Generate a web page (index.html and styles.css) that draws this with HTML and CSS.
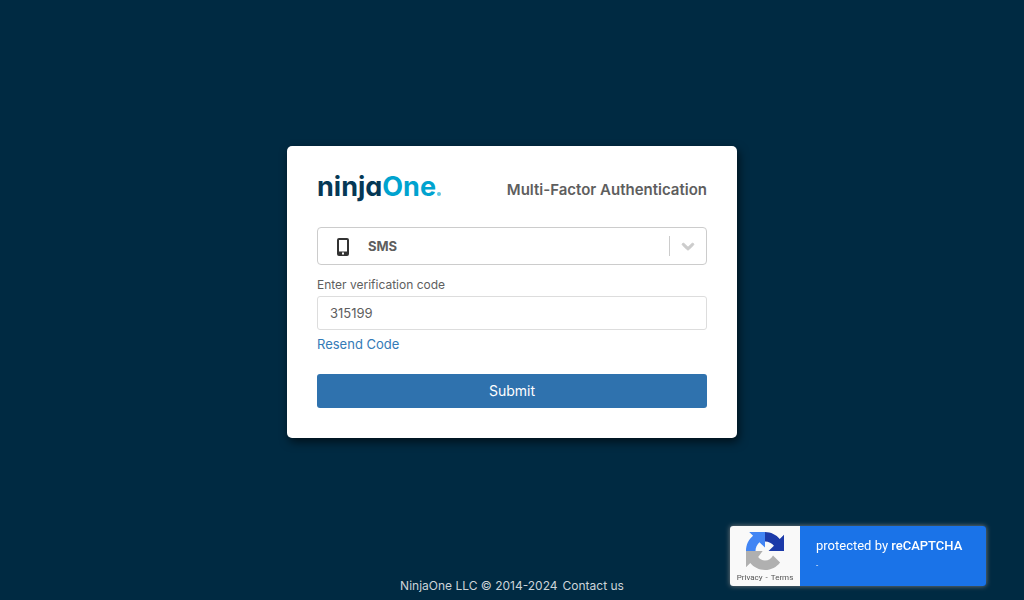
FILE: index.html
```html
<!DOCTYPE html>
<html lang="en">
<head>
<meta charset="utf-8">
<meta name="viewport" content="width=device-width, initial-scale=1">
<title>NinjaOne - Multi-Factor Authentication</title>
<link rel="stylesheet" href="styles.css">
</head>
<body class="page">
<main class="main">
  <form class="card">
    <header class="card-header">
      <div class="logo"><span class="logo-ninja">ninja</span><span class="logo-one">One</span><span class="logo-dot"></span></div>
      <h1 class="title">Multi-Factor Authentication</h1>
    </header>
    <div class="method">
      <svg class="method-icon" viewBox="0 0 12 18" aria-hidden="true"><path fill="#333" fill-rule="evenodd" d="M2 0h8a2 2 0 0 1 2 2v14a2 2 0 0 1-2 2H2a2 2 0 0 1-2-2V2a2 2 0 0 1 2-2zm0 2v11.500h8V2zm3 12.500v2h2v-2z"/></svg>
      <select class="method-select" aria-label="Authentication method"><option>SMS</option></select>
      <span class="method-arrow"><svg class="chevron" viewBox="0 0 20 20" aria-hidden="true"><path fill="#ccc" stroke="#ccc" d="M4.516 7.548c.436-.446 1.043-.481 1.576 0L10 11.295l3.908-3.747c.533-.481 1.141-.446 1.574 0 .436.445.408 1.197 0 1.615-.406.418-4.695 4.502-4.695 4.502a1.095 1.095 0 0 1-1.576 0S4.924 9.581 4.516 9.163s-.436-1.170 0-1.615z"/></svg></span>
    </div>
    <label class="label" for="code">Enter verification code</label>
    <input class="code" id="code" type="text" value="315199">
    <a class="resend" href="#">Resend Code</a>
    <button class="submit" type="submit">Submit</button>
  </form>
</main>
<footer class="footer"><span>NinjaOne LLC © 2014-2024</span><a class="contact" href="#">Contact us</a></footer>
<aside class="badge">
  <div class="badge-logo">
    <svg class="badge-icon" viewBox="0 0 64 64" aria-hidden="true">
      <path fill="#1c3aa9" d="M64 32c0-.5 0-.9 0-1.400V4.600l-7.200 7.200C50.900 4.600 42 0 32 0v16c6.300 0 11.600 2.900 15.100 7.300L38 32z"/>
      <path fill="#4285f4" d="M32 0H5.400l6.500 6.500C4.600 12.400 0 21.700 0 32h16c0-5.500 2.500-10.700 6.500-14.700L32 26z"/>
      <path fill="#b0b0b0" d="M0 32v27.500l7.200-7.200C13.100 59.500 22 64 32 64c10.400 0 19.600-5 25.400-12.700L45.500 39.400C42.900 44.500 37.700 48 32 48c-4.700 0-8.800-2.600-11.500-6L28 32z"/>
    </svg>
    <div class="badge-links"><a href="#">Privacy</a><span>-</span><a href="#">Terms</a></div>
  </div>
  <div class="badge-text"><div>protected by <strong>reCAPTCHA</strong></div><small class="badge-dash">-</small></div>
</aside>
</body>
</html>
```
FILE: styles.css
```css
* { box-sizing: border-box; }
.page { margin: 0; min-height: 100vh; display: flex; flex-direction: column; background: #002a42; font-family: Inter, "Liberation Sans", sans-serif; color: #5e5e5e; }
.main { flex: 1; display: flex; align-items: center; justify-content: center; padding: 6px 16px 0; }
.card { width: 100%; max-width: 450px; padding: 30px; background: #fff; border-radius: 5px; box-shadow: 2px 4px 10px rgba(0, 0, 0, 0.6); display: flex; flex-direction: column; }
.card-header { display: flex; align-items: center; justify-content: space-between; height: 27px; margin-bottom: 24px; }
.logo { display: flex; align-items: baseline; padding-bottom: 6px; font: 700 27px/27px Inter, sans-serif; font-feature-settings: "cv11"; }
.logo-ninja { color: #053856; }
.logo-one { color: #00a3cf; }
.logo-dot { width: 4px; height: 4px; margin-left: 1px; border-radius: 2px; background: #64c7e2; }
.title { margin: 0; font-size: 15px; line-height: 20px; font-weight: 600; }
.method { position: relative; height: 38px; border: 1px solid #ccc; border-radius: 4px; }
.method-icon { position: absolute; left: 19px; top: 10px; width: 12px; height: 18px; }
.method-select { appearance: none; width: 100%; height: 100%; padding: 0 50px; border: 0; background: transparent; color: #5e5e5e; font: bold 13px/18px Inter, sans-serif; }
.method-arrow { position: absolute; right: 0; top: 8px; width: 37px; height: 20px; border-left: 1px solid #ccc; display: flex; justify-content: center; align-items: center; pointer-events: none; }
.chevron { width: 20px; height: 20px; }
.label { margin-top: 12px; font-size: 12px; line-height: 16px; }
.code { height: 34px; margin-top: 3px; padding: 0 12px; border: 1px solid #ddd; border-radius: 3px; background: #fff; color: #5e5e5e; font: 13px/18px Inter, sans-serif; }
.resend { align-self: flex-start; margin-top: 5px; font-size: 13px; line-height: 18px; color: #337ab7; text-decoration: none; }
.submit { height: 34px; margin-top: 21px; border: 0; border-radius: 3px; background: #2f72ae; color: #fff; font: 14px/20px Inter, sans-serif; }
.footer { display: flex; justify-content: center; gap: 5px; padding-bottom: 6px; color: #ccd4d9; font-size: 12px; line-height: 16px; }
.contact { color: inherit; text-decoration: none; }
.badge { position: fixed; right: 38px; bottom: 14px; width: 256px; height: 60px; display: flex; border-radius: 3px; overflow: hidden; box-shadow: 0 0 5px #808080; font-family: Roboto, sans-serif; }
.badge-logo { width: 70px; padding-top: 6px; background: #f9f9f9; display: flex; flex-direction: column; align-items: center; }
.badge-icon { width: 38px; height: 38px; }
.badge-links { display: flex; gap: 3px; margin-top: 3px; font-size: 8px; line-height: 10px; color: #555; }
.badge-links a { color: inherit; text-decoration: none; }
.badge-text { flex: 1; padding: 12px 16px; background: #1a73e8; color: #fff; font-size: 13px; line-height: 16px; }
.badge-text strong { font-weight: 500; }
.badge-dash { display: block; margin-top: 5px; font-size: 8px; line-height: 14px; }
```
